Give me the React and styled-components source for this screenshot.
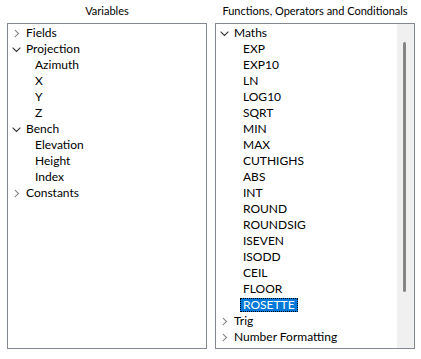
import React from "react";
import styled, { createGlobalStyle } from "styled-components";

const GlobalStyle = createGlobalStyle`
    html, body {
        margin: 0;
        padding: 0;
        background: #fff;
    }
    body {
        font-family: Lato, "Noto Sans", sans-serif;
        font-size: 12px;
        color: #000;
    }
`;

const variables = [
    { label: "Fields", open: false },
    { label: "Projection", open: true, children: ["Azimuth", "X", "Y", "Z"] },
    { label: "Bench", open: true, children: ["Elevation", "Height", "Index"] },
    { label: "Constants", open: false },
];

const functions = [
    {
        label: "Maths",
        open: true,
        children: [
            "EXP", "EXP10", "LN", "LOG10", "SQRT", "MIN", "MAX", "CUTHIGHS",
            "ABS", "INT", "ROUND", "ROUNDSIG", "ISEVEN", "ISODD", "CEIL",
            "FLOOR", "ROSETTE",
        ],
    },
    { label: "Trig", open: false },
    { label: "Number Formatting", open: false },
];

const Chevron = ({ open }) =>
    open ? (
        <svg width="9" height="9" viewBox="0 0 9 9">
            <path d="M0.6 2.6 L4.5 6.4 L8.4 2.6" fill="none" stroke="#333" strokeWidth="1.1" />
        </svg>
    ) : (
        <svg width="9" height="9" viewBox="0 0 9 9">
            <path d="M2.8 0.8 L6.5 4.5 L2.8 8.2" fill="none" stroke="#8a8a8a" strokeWidth="1.1" />
        </svg>
    );

const Tree = ({ nodes, selected }) => (
    <List>
        {nodes.map((node) => (
            <React.Fragment key={node.label}>
                <Row>
                    <Toggle>
                        <Chevron open={node.open} />
                    </Toggle>
                    <Label>{node.label}</Label>
                </Row>
                {node.open &&
                    node.children.map((child) => (
                        <Row key={child} $child>
                            <Label $selected={child === selected}>{child}</Label>
                        </Row>
                    ))}
            </React.Fragment>
        ))}
    </List>
);

const App = () => (
    <>
        <GlobalStyle />
        <Page>
            <Column>
                <Heading>Variables</Heading>
                <Box>
                    <Tree nodes={variables} />
                </Box>
            </Column>
            <Column>
                <Heading>Functions, Operators and Conditionals</Heading>
                <Box>
                    <Tree nodes={functions} selected="ROSETTE" />
                    <Track>
                        <Thumb />
                    </Track>
                </Box>
            </Column>
        </Page>
    </>
);

const Page = styled.div`
    display: flex;
    gap: 8px;
    padding-left: 7px;
    width: 421px;
    height: 359px;
    box-sizing: border-box;
`;
const Column = styled.div`
    display: flex;
    flex-direction: column;
    width: 200px;
`;
const Heading = styled.div`
    height: 23px;
    line-height: 22px;
    font-size: 11px;
    text-align: center;
    white-space: nowrap;
`;
const Box = styled.div`
    display: flex;
    height: 326px;
    border: 1px solid #828790;
    box-sizing: border-box;
    background: #fff;
`;
const List = styled.div`
    flex: 1;
    padding-top: 1px;
    overflow: hidden;
`;
const Row = styled.div`
    display: flex;
    align-items: center;
    height: 16px;
    padding-left: ${(p) => (p.$child ? "24px" : "4px")};
    white-space: nowrap;
`;
const Toggle = styled.span`
    display: flex;
    align-items: center;
    justify-content: center;
    width: 9px;
    height: 16px;
    margin-right: 2px;
`;
const Label = styled.span`
    padding: 0 3px;
    line-height: 14px;
    height: 14px;
    box-sizing: border-box;
    color: ${(p) => (p.$selected ? "#fff" : "#000")};
    background: ${(p) => (p.$selected ? "#0078d7" : "transparent")};
    outline: ${(p) => (p.$selected ? "1px dotted #000" : "none")};
    outline-offset: -1px;
`;
const Track = styled.div`
    position: relative;
    width: 17px;
    background: #f0f0f0;
`;
const Thumb = styled.div`
    position: absolute;
    left: 6px;
    top: 18px;
    width: 3px;
    height: 250px;
    border-radius: 2px;
    background: #858585;
`;

export default App;
